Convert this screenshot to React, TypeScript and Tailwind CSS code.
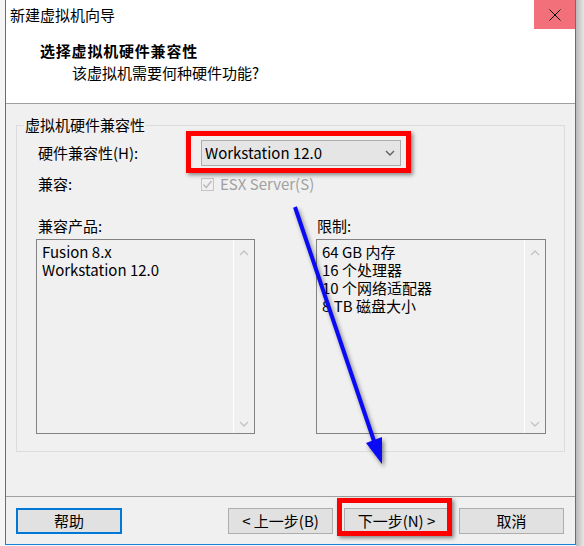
import React from "react";

const Chevron = ({ up = false, className = "" }: { up?: boolean; className?: string }) => (
  <svg width="10" height="6" viewBox="0 0 10 6" className={className}>
    <polyline
      points={up ? "1,5 5,1 9,5" : "1,1 5,5 9,1"}
      fill="none"
      stroke="currentColor"
      strokeWidth="1.4"
    />
  </svg>
);

const ListBox = ({ items }: { items: string[] }) => (
  <div className="flex h-[195px] border border-[#828282] bg-[#f0f0f0]">
    <div className="flex-1 pt-[3px] pl-[5px] text-[15px] leading-[18px] text-black">
      {items.map((t) => (
        <div key={t} className="h-[18px]">
          {t}
        </div>
      ))}
    </div>
    <div className="flex w-[21px] flex-col items-center justify-between border-l border-white pt-[10px] pb-[6px] text-[#c4c4c4]">
      <Chevron up />
      <Chevron />
    </div>
  </div>
);

const Button = ({ label, focused = false }: { label: string; focused?: boolean }) => (
  <div
    className={
      focused
        ? "flex h-[26px] w-[106px] items-center justify-center border-2 border-[#0078d7] bg-[#e1e1e1] text-[15px] text-black"
        : "flex h-[26px] w-[105px] items-center justify-center border border-[#adadad] bg-[#e1e1e1] text-[15px] text-black"
    }
  >
    {label}
  </div>
);

export default function App() {
  return (
    <div className="relative flex h-[546px] w-[584px] overflow-hidden bg-[#f5f5f5] font-['Noto_Sans_CJK_SC','Noto_Sans',sans-serif]">
      <div className="w-[5px]" />

      <div className="flex h-[545px] w-[571px] flex-col border-x border-b border-[#1883d7] bg-[#f0f0f0]">
        {/* header */}
        <div className="h-[104px] border-b border-[#a0a0a0] bg-white">
          <div className="flex h-[30px] justify-between">
            <div className="pl-[4px] pt-[5px] text-[15px] leading-[20px] text-black">新建虚拟机向导</div>
            <div className="flex h-[29px] w-[41px] items-center justify-center bg-[#f1707a]">
              <svg width="12" height="12" viewBox="0 0 12 12">
                <path d="M0.5 0.5 L11.5 11.5 M11.5 0.5 L0.5 11.5" stroke="#000" strokeWidth="1" />
              </svg>
            </div>
          </div>
          <div className="pl-[34px] pt-[11px] text-[15px] font-bold leading-[20px] tracking-[0.8px] text-black">
            选择虚拟机硬件兼容性
          </div>
          <div className="pl-[66px] pt-[2px] text-[15px] leading-[20px] text-black">该虚拟机需要何种硬件功能?</div>
        </div>

        {/* body */}
        <div className="h-[393px] border-b border-[#a0a0a0] px-[10px] pt-[12px]">
          <fieldset className="border border-[#dcdcdc] pr-[18px] pb-[17px] pl-[19px]">
            <legend className="-ml-[12px] px-[1px] text-[15px] leading-[18px] text-black">虚拟机硬件兼容性</legend>

            <div className="mt-[6px] flex h-[26px] items-center">
              <div className="w-[165px] pl-[2px] text-[15px] text-black">硬件兼容性(H):</div>
              <div className="relative">
                <div className="flex h-[26px] w-[200px] items-center justify-between border border-[#acacac] bg-[#e5e5e5] pr-[5px] pl-[3px] text-[15px] text-black">
                  <span>Workstation 12.0</span>
                  <Chevron className="text-[#606060]" />
                </div>
                <div className="absolute -top-[9px] -right-[10px] -bottom-[7px] -left-[15px] border-[5px] border-[#ff0000] shadow-[2px_2px_4px_rgba(0,0,0,0.45)]" />
              </div>
            </div>

            <div className="mt-[8px] flex h-[20px] items-center">
              <div className="w-[165px] pl-[2px] text-[15px] text-black">兼容:</div>
              <div className="flex h-[13px] w-[13px] items-center justify-center border border-[#c4c4c4] bg-[#f0f0f0]">
                <svg width="11" height="11" viewBox="0 0 11 11">
                  <polyline points="1.5,5.5 4.2,8.5 9.5,2" fill="none" stroke="#bcbcbc" strokeWidth="1.5" />
                </svg>
              </div>
              <span className="ml-[6px] text-[15px] text-[#a0a0a0]">ESX Server(S)</span>
            </div>

            <div className="mt-[23px] grid grid-cols-[219px_230px] gap-x-[61px]">
              <div>
                <div className="mb-[4px] pl-[2px] text-[15px] leading-[18px] text-black">兼容产品:</div>
                <ListBox items={["Fusion 8.x", "Workstation 12.0"]} />
              </div>
              <div>
                <div className="mb-[4px] pl-[1px] text-[15px] leading-[18px] text-black">限制:</div>
                <ListBox items={["64 GB 内存", "16 个处理器", "10 个网络适配器", "8 TB 磁盘大小"]} />
              </div>
            </div>
          </fieldset>
        </div>

        {/* footer */}
        <div className="flex pt-[11px] pr-[11px] pl-[10px]">
          <Button label="帮助" focused />
          <div className="ml-auto flex gap-[10px]">
            <Button label="< 上一步(B)" />
            <div className="relative ml-[1px]">
              <Button label="下一步(N) >" />
              <div className="absolute -top-[10px] -right-[3px] -bottom-[2px] -left-[7px] border-[5px] border-[#ff0000] shadow-[2px_2px_4px_rgba(0,0,0,0.45)]" />
            </div>
            <Button label="取消" />
          </div>
        </div>
      </div>

      <div className="flex-1 bg-gradient-to-r from-[#b9b9b9] to-[#e6e6e6]" />

      <svg
        className="pointer-events-none absolute top-0 left-0 drop-shadow-[2px_3px_2px_rgba(0,0,0,0.45)]"
        width="584"
        height="546"
        viewBox="0 0 584 546"
      >
        <line x1="295" y1="207" x2="374" y2="441" stroke="#0a0af5" strokeWidth="4" />
        <polygon points="382,464 382,437 366,443" fill="#0a0af5" />
      </svg>
    </div>
  );
}
